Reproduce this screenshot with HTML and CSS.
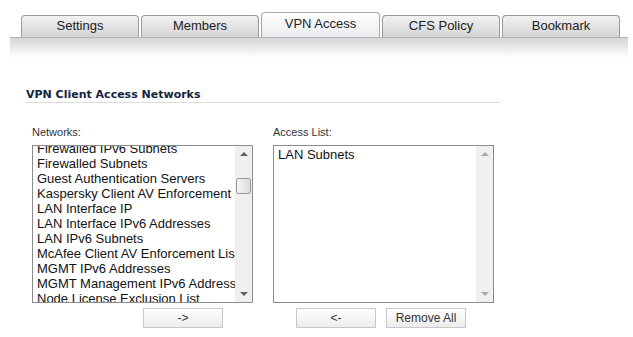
FILE: index.html
```html
<!DOCTYPE html>
<html lang="en">
<head>
  <meta charset="UTF-8">
  <title>VPN Access</title>
  <link rel="stylesheet" href="styles.css">
</head>
<body>
  <div class="tabs">
    <div class="tab">Settings</div>
    <div class="tab">Members</div>
    <div class="tab active">VPN Access</div>
    <div class="tab">CFS Policy</div>
    <div class="tab">Bookmark</div>
  </div>
  <div class="band"></div>

  <div class="section">
    <h3 class="title">VPN Client Access Networks</h3>

    <div class="columns">
      <div class="col">
        <div class="label">Networks:</div>
        <div class="listbox">
          <ul class="items scrolled">
            <li>Firewalled IPv6 Subnets</li>
            <li>Firewalled Subnets</li>
            <li>Guest Authentication Servers</li>
            <li>Kaspersky Client AV Enforcement List</li>
            <li>LAN Interface IP</li>
            <li>LAN Interface IPv6 Addresses</li>
            <li>LAN IPv6 Subnets</li>
            <li>McAfee Client AV Enforcement List</li>
            <li>MGMT IPv6 Addresses</li>
            <li>MGMT Management IPv6 Addresses</li>
            <li>Node License Exclusion List</li>
          </ul>
          <div class="scrollbar">
            <span class="arrow up"></span>
            <span class="thumb"></span>
            <span class="arrow down"></span>
          </div>
        </div>
        <div class="buttons left">
          <button class="btn">-&gt;</button>
        </div>
      </div>

      <div class="col">
        <div class="label">Access List:</div>
        <div class="listbox">
          <ul class="items">
            <li>LAN Subnets</li>
          </ul>
          <div class="scrollbar">
            <span class="arrow up faint"></span>
            <span class="arrow down faint"></span>
          </div>
        </div>
        <div class="buttons right">
          <button class="btn">&lt;-</button>
          <button class="btn">Remove All</button>
        </div>
      </div>
    </div>
  </div>
</body>
</html>
```

FILE: styles.css
```css
body {
  margin: 0;
  background: #fff;
  font-family: "Liberation Sans", Arial, sans-serif;
  color: #222;
}

.tabs {
  display: flex;
  gap: 2px;
  height: 25px;
  margin-top: 12px;
  padding-left: 21px;
  align-items: flex-end;
}

.tab {
  box-sizing: border-box;
  width: 118px;
  height: 22px;
  border: 1px solid #9a9a9a;
  border-bottom: none;
  border-radius: 4px 4px 0 0;
  background: linear-gradient(#f2f2f2, #d4d4d4);
  font-size: 13px;
  line-height: 20px;
  text-align: center;
  color: #222;
}

.tab.active {
  width: 119px;
  height: 25px;
  border-color: #a8a8a8;
  background: linear-gradient(#ffffff, #ececf0);
  line-height: 22px;
}

.band {
  margin-left: 10px;
  width: 618px;
  height: 20px;
  border-top: 1px solid #b4b4b4;
  background: linear-gradient(#d6d6d6, #ffffff);
}

.section {
  padding-left: 26px;
}

.title {
  margin: 30px 0 0;
  width: 474px;
  height: 14px;
  border-bottom: 1px solid #dcdcdc;
  font-family: "DejaVu Sans", Verdana, sans-serif;
  font-size: 11px;
  font-weight: bold;
  line-height: 13px;
  color: #142440;
}

.columns {
  display: flex;
  gap: 20px;
  padding-left: 6px;
  margin-top: 23px;
}

.col {
  width: 221px;
}

.label {
  font-size: 11px;
  line-height: 13px;
  color: #333;
  margin-bottom: 6px;
}

.listbox {
  box-sizing: border-box;
  display: flex;
  height: 158px;
  border: 1px solid #8c8c8c;
  overflow: hidden;
}

.items {
  flex: 1;
  list-style: none;
  margin: 0;
  padding: 1px 0 0 4px;
  font-size: 13px;
  line-height: 15px;
  color: #111;
  overflow: hidden;
  white-space: nowrap;
}

.items.scrolled {
  margin-top: -6px;
}

.scrollbar {
  position: relative;
  width: 17px;
  background: #f0f0f0;
}

.arrow {
  position: absolute;
  left: 5px;
  width: 0;
  height: 0;
  border-left: 4px solid transparent;
  border-right: 4px solid transparent;
}

.arrow.up {
  top: 6px;
  border-bottom: 4px solid #606060;
}

.arrow.down {
  bottom: 6px;
  border-top: 4px solid #606060;
}

.arrow.faint.up {
  border-bottom-color: #a8a8a8;
}

.arrow.faint.down {
  border-top-color: #a8a8a8;
}

.thumb {
  position: absolute;
  top: 32px;
  left: 1px;
  box-sizing: border-box;
  width: 15px;
  height: 16px;
  border: 1px solid #9a9a9a;
  border-radius: 2px;
  background: linear-gradient(90deg, #f4f4f4, #dcdcdc);
}

.buttons {
  display: flex;
  gap: 10px;
  margin-top: 5px;
}

.buttons.left {
  justify-content: flex-end;
  padding-right: 30px;
}

.buttons.right {
  padding-left: 23px;
}

.btn {
  box-sizing: border-box;
  width: 80px;
  height: 20px;
  padding: 0;
  border: 1px solid #c8c8c8;
  background: linear-gradient(#ffffff, #ececec);
  font-family: "Liberation Sans", Arial, sans-serif;
  font-size: 12px;
  color: #333;
}
```
